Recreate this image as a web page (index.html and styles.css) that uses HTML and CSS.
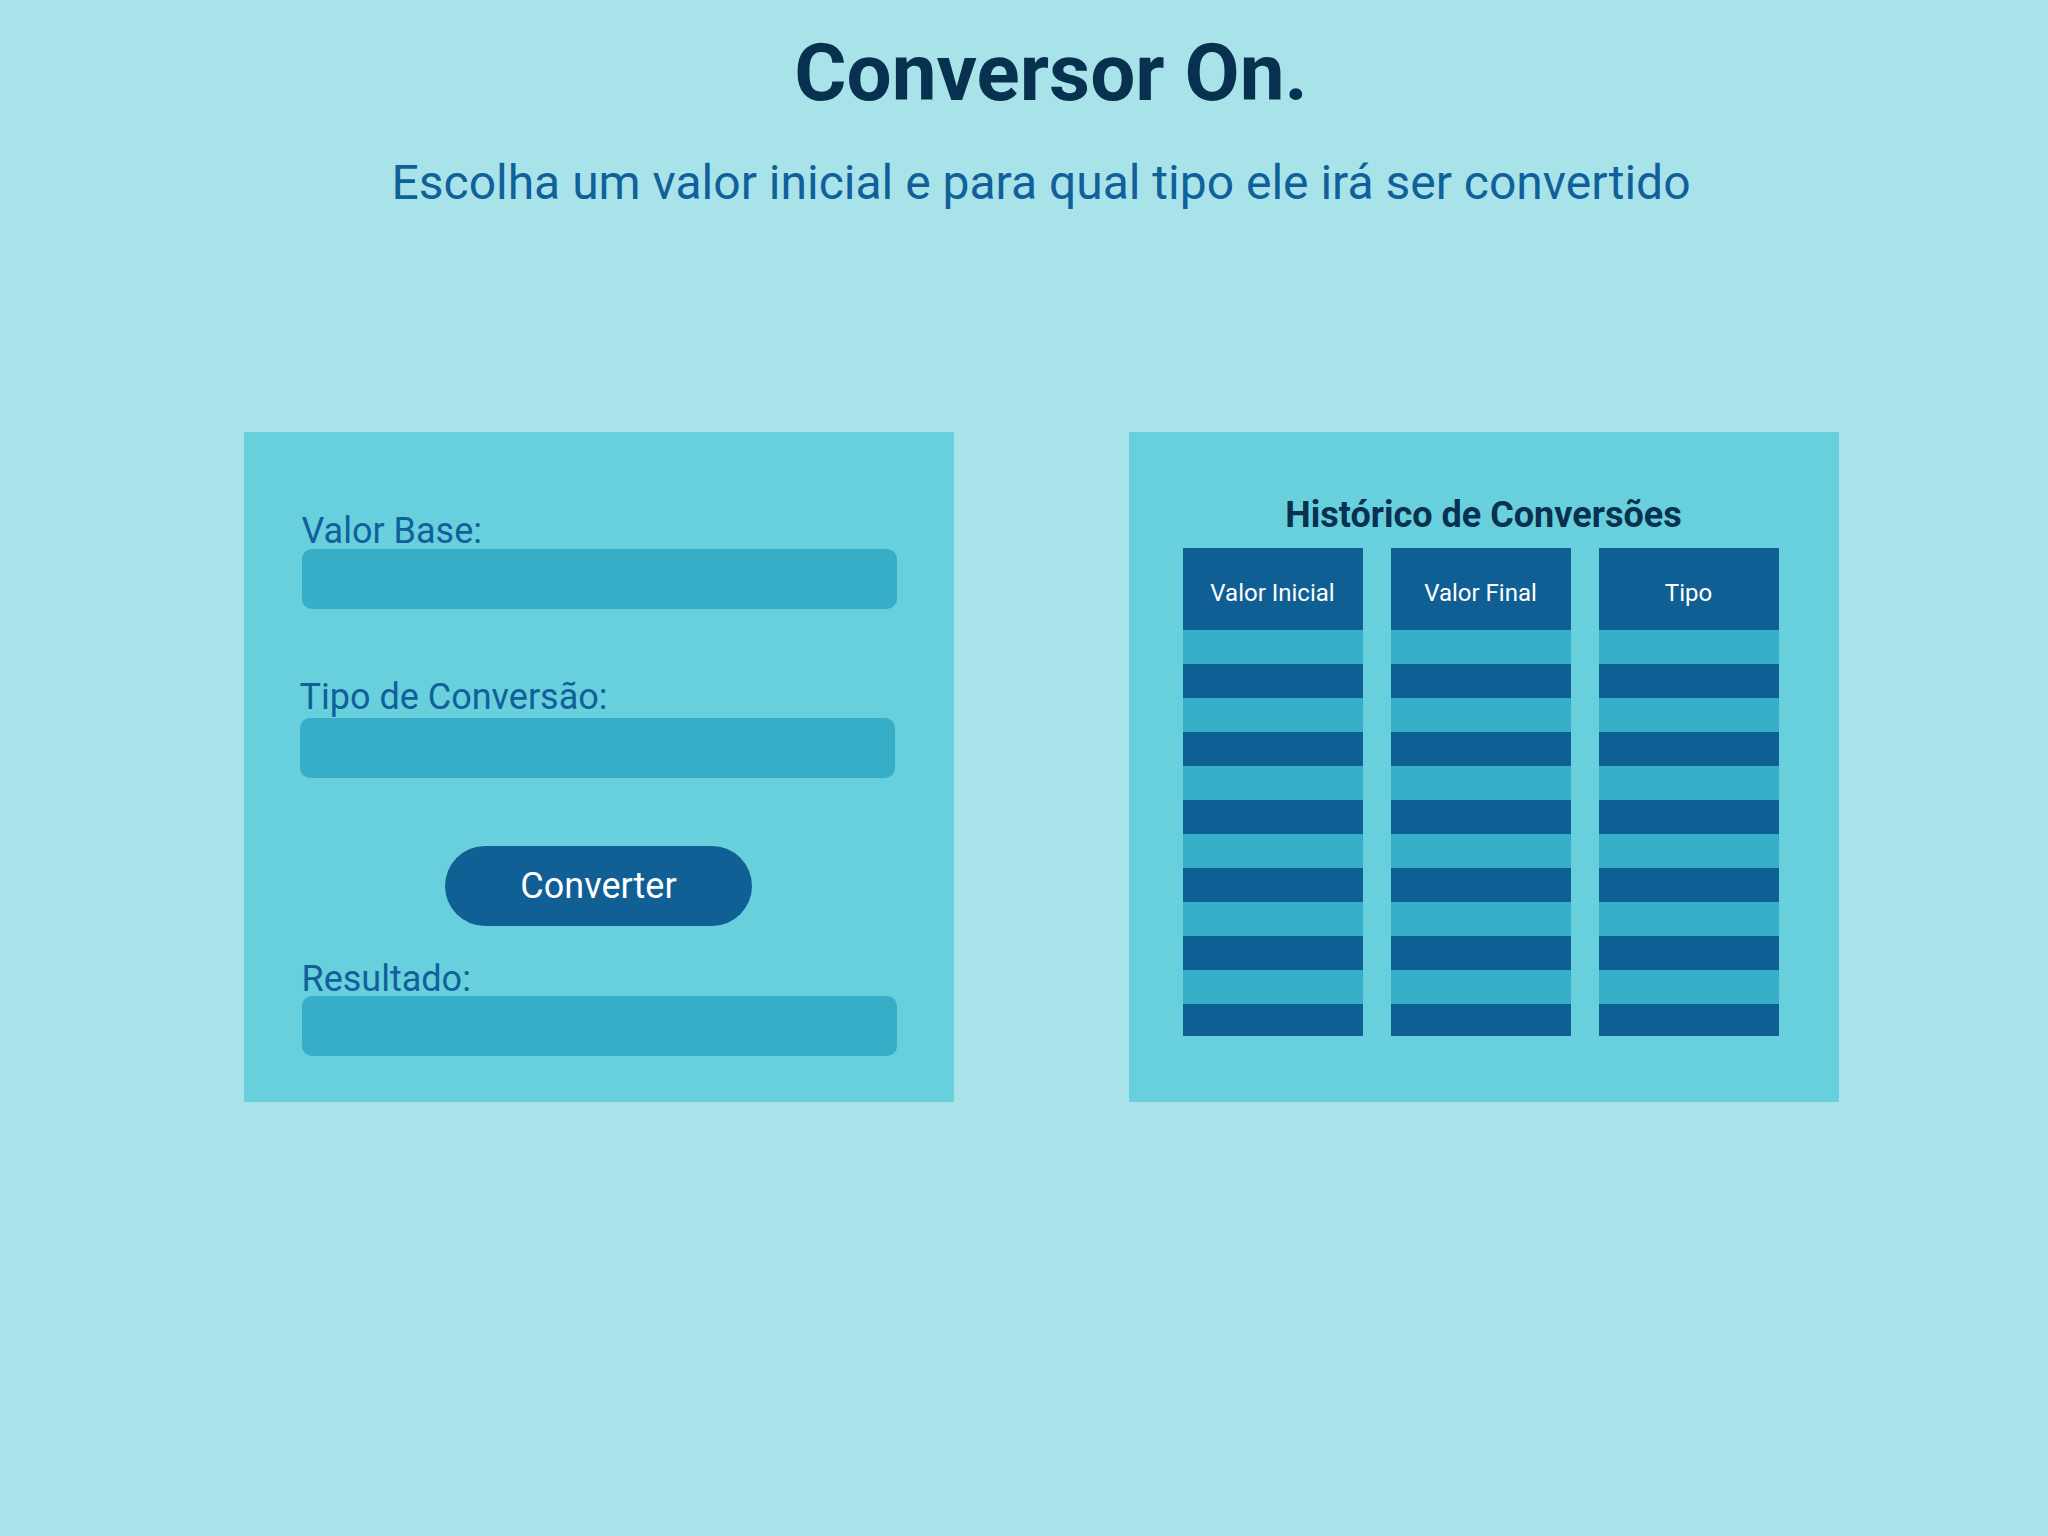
FILE: index.html
```html
<!DOCTYPE html>
<html lang="pt-BR">
<head>
<meta charset="utf-8">
<title>Conversor On.</title>
<link rel="stylesheet" href="styles.css">
</head>
<body>
<main class="page">
  <header class="masthead">
    <h1 class="title">Conversor On.</h1>
    <p class="subtitle">Escolha um valor inicial e para qual tipo ele irá ser convertido</p>
  </header>
  <section class="panels">
    <form class="card converter">
      <label class="field-label" for="base">Valor Base:</label>
      <input class="field" id="base" type="text">
      <label class="field-label gap" for="tipo">Tipo de Conversão:</label>
      <select class="field" id="tipo"></select>
      <button class="btn" type="button">Converter</button>
      <label class="field-label result" for="resultado">Resultado:</label>
      <input class="field" id="resultado" type="text" readonly>
    </form>
    <div class="card history">
      <h2 class="history-title">Histórico de Conversões</h2>
      <table class="history-table">
        <thead>
          <tr><th>Valor Inicial</th><th>Valor Final</th><th>Tipo</th></tr>
        </thead>
        <tbody>
          <tr><td></td><td></td><td></td></tr>
          <tr><td></td><td></td><td></td></tr>
          <tr><td></td><td></td><td></td></tr>
          <tr><td></td><td></td><td></td></tr>
          <tr><td></td><td></td><td></td></tr>
          <tr><td></td><td></td><td></td></tr>
          <tr><td></td><td></td><td></td></tr>
          <tr><td></td><td></td><td></td></tr>
          <tr><td></td><td></td><td></td></tr>
          <tr><td></td><td></td><td></td></tr>
          <tr><td></td><td></td><td></td></tr>
          <tr><td></td><td></td><td></td></tr>
        </tbody>
      </table>
    </div>
  </section>
</main>
</body>
</html>
```
FILE: styles.css
```css
* { box-sizing: border-box; }

html, body {
  margin: 0;
  padding: 0;
  background: #a8e3ea;
}

body {
  font-family: Roboto, "Liberation Sans", Arial, sans-serif;
  min-height: 1536px;
}

.page {
  padding-left: 34px;
  display: flex;
  flex-direction: column;
  align-items: center;
}

.masthead {
  display: flex;
  flex-direction: column;
  align-items: center;
  padding-top: 33px;
}

.title {
  margin: 0 0 0 20px;
  font-size: 80px;
  line-height: 80px;
  font-weight: 700;
  color: #08304f;
}

.subtitle {
  margin: 46px 0 0;
  font-size: 48px;
  line-height: 48px;
  font-weight: 400;
  color: #10609a;
}

.panels {
  display: flex;
  gap: 175px;
  margin-top: 225px;
}

.card {
  background: #68cfdd;
  height: 670px;
}

.converter {
  width: 710px;
  display: flex;
  flex-direction: column;
  align-items: flex-start;
  padding: 82px 56px 0 58px;
}

.field-label {
  font-size: 36px;
  line-height: 35px;
  color: #10609a;
}

.field-label.gap { margin-top: 71px; margin-left: -2px; }
.field-label.result { margin-top: 36px; }

.field {
  display: block;
  width: 595px;
  height: 60px;
  border: none;
  border-radius: 10px;
  background: #37aec8;
  appearance: none;
  -webkit-appearance: none;
  font: inherit;
  outline: none;
}

#tipo { margin-top: 3px; margin-left: -2px; }
#resultado { margin-top: -1px; }

.btn {
  align-self: center;
  margin-top: 68px;
  width: 307px;
  height: 80px;
  border: none;
  border-radius: 40px;
  background: #106096;
  color: #ffffff;
  font-family: Roboto, "Liberation Sans", Arial, sans-serif;
  font-size: 36px;
  line-height: 36px;
  padding: 0;
  margin-left: -2px;
}

.history {
  width: 710px;
  padding-top: 66px;
  display: flex;
  flex-direction: column;
  align-items: flex-start;
}

.history-title {
  align-self: stretch;
  margin: 0;
  text-align: center;
  font-size: 36px;
  line-height: 35px;
  font-weight: 700;
  color: #08304f;
}

.history-table {
  margin: 15px 0 0 26px;
  border-collapse: separate;
  border-spacing: 28px 0;
  table-layout: fixed;
  width: 652px;
}

.history-table th,
.history-table td {
  width: 180px;
  padding: 0;
}

.history-table th {
  height: 82px;
  background: #0f5f94;
  color: #ffffff;
  font-weight: 400;
  font-size: 24px;
  line-height: 24px;
  padding-top: 8px;
  text-align: center;
}

.history-table td {
  height: 34px;
}

.history-table tbody tr:nth-child(odd) td { background: #37aec8; }
.history-table tbody tr:nth-child(even) td { background: #0f5f94; }
.history-table tbody tr:last-child td { height: 32px; }
```
